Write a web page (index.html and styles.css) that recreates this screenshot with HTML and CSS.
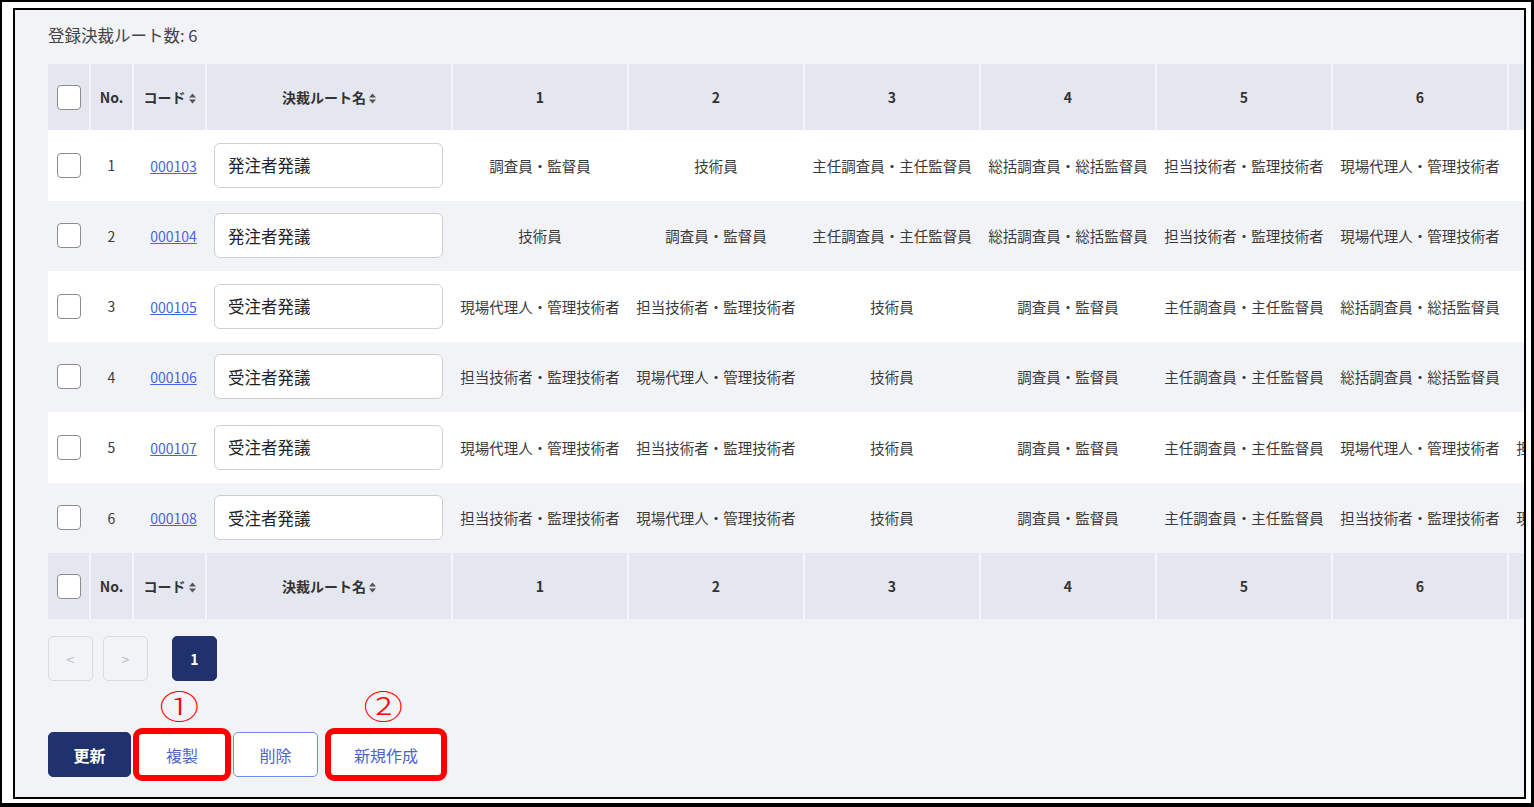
FILE: index.html
```html
<!DOCTYPE html>
<html lang="ja">
<head>
  <meta charset="utf-8">
  <title>決裁ルート一覧</title>
  <link rel="stylesheet" href="styles.css">
</head>
<body>
<div class="frame">
  <div class="screen">
    <p class="count">登録決裁ルート数: 6</p>

    <div class="table-scroll">
      <table class="route-table">
        <colgroup>
          <col class="c-check"><col class="c-no"><col class="c-code"><col class="c-name">
          <col class="c-step"><col class="c-step"><col class="c-step"><col class="c-step">
          <col class="c-step"><col class="c-step"><col class="c-step">
        </colgroup>
        <thead>
          <tr>
            <th><input class="check" type="checkbox"></th>
            <th>No.</th>
            <th>コード<svg class="sort" viewBox="0 0 7 11"><path d="M0 4.6L3.5 0.4 7 4.6z M0 6.4L3.5 10.6 7 6.4z"/></svg></th>
            <th>決裁ルート名<svg class="sort" viewBox="0 0 7 11"><path d="M0 4.6L3.5 0.4 7 4.6z M0 6.4L3.5 10.6 7 6.4z"/></svg></th>
            <th>1</th><th>2</th><th>3</th><th>4</th><th>5</th><th>6</th><th>7</th>
          </tr>
        </thead>
        <tbody>
          <tr>
            <td><input class="check" type="checkbox"></td>
            <td>1</td>
            <td><a class="code" href="#">000103</a></td>
            <td><input class="name-input" type="text" value="発注者発議"></td>
            <td>調査員・監督員</td>
            <td>技術員</td>
            <td>主任調査員・主任監督員</td>
            <td>総括調査員・総括監督員</td>
            <td>担当技術者・監理技術者</td>
            <td>現場代理人・管理技術者</td>
            <td></td>
          </tr>
          <tr>
            <td><input class="check" type="checkbox"></td>
            <td>2</td>
            <td><a class="code" href="#">000104</a></td>
            <td><input class="name-input" type="text" value="発注者発議"></td>
            <td>技術員</td>
            <td>調査員・監督員</td>
            <td>主任調査員・主任監督員</td>
            <td>総括調査員・総括監督員</td>
            <td>担当技術者・監理技術者</td>
            <td>現場代理人・管理技術者</td>
            <td></td>
          </tr>
          <tr>
            <td><input class="check" type="checkbox"></td>
            <td>3</td>
            <td><a class="code" href="#">000105</a></td>
            <td><input class="name-input" type="text" value="受注者発議"></td>
            <td>現場代理人・管理技術者</td>
            <td>担当技術者・監理技術者</td>
            <td>技術員</td>
            <td>調査員・監督員</td>
            <td>主任調査員・主任監督員</td>
            <td>総括調査員・総括監督員</td>
            <td></td>
          </tr>
          <tr>
            <td><input class="check" type="checkbox"></td>
            <td>4</td>
            <td><a class="code" href="#">000106</a></td>
            <td><input class="name-input" type="text" value="受注者発議"></td>
            <td>担当技術者・監理技術者</td>
            <td>現場代理人・管理技術者</td>
            <td>技術員</td>
            <td>調査員・監督員</td>
            <td>主任調査員・主任監督員</td>
            <td>総括調査員・総括監督員</td>
            <td></td>
          </tr>
          <tr>
            <td><input class="check" type="checkbox"></td>
            <td>5</td>
            <td><a class="code" href="#">000107</a></td>
            <td><input class="name-input" type="text" value="受注者発議"></td>
            <td>現場代理人・管理技術者</td>
            <td>担当技術者・監理技術者</td>
            <td>技術員</td>
            <td>調査員・監督員</td>
            <td>主任調査員・主任監督員</td>
            <td>現場代理人・管理技術者</td>
            <td>担当技術者・監理技術者</td>
          </tr>
          <tr>
            <td><input class="check" type="checkbox"></td>
            <td>6</td>
            <td><a class="code" href="#">000108</a></td>
            <td><input class="name-input" type="text" value="受注者発議"></td>
            <td>担当技術者・監理技術者</td>
            <td>現場代理人・管理技術者</td>
            <td>技術員</td>
            <td>調査員・監督員</td>
            <td>主任調査員・主任監督員</td>
            <td>担当技術者・監理技術者</td>
            <td>現場代理人・管理技術者</td>
          </tr>
        </tbody>
        <tfoot>
          <tr>
            <th><input class="check" type="checkbox"></th>
            <th>No.</th>
            <th>コード<svg class="sort" viewBox="0 0 7 11"><path d="M0 4.6L3.5 0.4 7 4.6z M0 6.4L3.5 10.6 7 6.4z"/></svg></th>
            <th>決裁ルート名<svg class="sort" viewBox="0 0 7 11"><path d="M0 4.6L3.5 0.4 7 4.6z M0 6.4L3.5 10.6 7 6.4z"/></svg></th>
            <th>1</th><th>2</th><th>3</th><th>4</th><th>5</th><th>6</th><th>7</th>
          </tr>
        </tfoot>
      </table>
    </div>

    <div class="pager">
      <button class="page-btn" type="button" disabled>&lt;</button>
      <button class="page-btn" type="button" disabled>&gt;</button>
      <button class="page-btn current" type="button">1</button>
    </div>

    <div class="actions">
      <button class="btn btn-primary" type="button">更新</button>
      <span class="callout" data-no="①"><button class="btn btn-outline btn-copy" type="button">複製</button></span>
      <button class="btn btn-outline btn-delete" type="button">削除</button>
      <span class="callout callout-new" data-no="②"><button class="btn btn-outline btn-new" type="button">新規作成</button></span>
    </div>
  </div>
</div>
</body>
</html>
```

FILE: styles.css
```css
html, body {
  margin: 0;
  padding: 0;
  background: #fff;
}

body {
  font-family: "Noto Sans CJK JP", "Noto Sans", sans-serif;
  color: #333;
}

/* double black frame around the screen */
.frame {
  box-sizing: border-box;
  height: 807px;
  border: solid #000;
  border-width: 2px 3px 4px 2px;
  padding: 6px 5px 4px 11px;
  background: #fff;
}

.screen {
  box-sizing: border-box;
  height: 100%;
  border: 2px solid #000;
  background: #f2f3f7;
  padding: 13px 0 0 33px;
  overflow: hidden;
}

.count {
  margin: 0 0 17px;
  font-size: 16.5px;
  line-height: 24px;
  color: #444;
}

.table-scroll {
  overflow: hidden;
}

.route-table {
  table-layout: fixed;
  width: 1636px;
  border-collapse: collapse;
  font-size: 14.5px;
}

.c-check { width: 42px; }
.c-no { width: 43px; }
.c-code { width: 73px; }
.c-name { width: 246px; }
.c-step { width: 176px; }

.route-table th {
  height: 66px;
  padding: 0;
  background: #e4e7f0;
  border-right: 2px solid #f4f5f9;
  font-size: 14px;
  font-weight: bold;
  color: #333;
  text-align: center;
  white-space: nowrap;
}

.route-table td {
  height: 70.5px;
  padding: 0 4px;
  text-align: center;
  white-space: nowrap;
  color: #3a3a3a;
}

.route-table td:first-child,
.route-table td:nth-child(2) {
  padding: 0;
  font-size: 14px;
}

.route-table tbody tr:nth-child(odd) {
  background: #fff;
}

.sort {
  width: 7px;
  height: 11px;
  margin-left: 3px;
  vertical-align: -1px;
  fill: #555;
}

.check {
  -webkit-appearance: none;
  appearance: none;
  display: block;
  box-sizing: border-box;
  width: 24px;
  height: 25px;
  margin: 0 auto;
  border: 1.5px solid #8c8c8c;
  border-radius: 4px;
  background: #fff;
}

.code {
  display: inline-block;
  padding-left: 8px;
  font-size: 14px;
  color: #4466e0;
  text-decoration: underline;
}

.name-input {
  display: block;
  box-sizing: border-box;
  width: 229px;
  height: 45px;
  margin-left: 4px;
  padding: 0 13px;
  border: 1px solid #cfcfcf;
  border-radius: 6px;
  background: #fff;
  font-family: inherit;
  font-size: 16.5px;
  color: #222;
}

/* pagination */
.pager {
  display: flex;
  gap: 10px;
  margin-top: 17px;
}

.page-btn {
  box-sizing: border-box;
  width: 45px;
  height: 45px;
  border: 1px solid #dadada;
  border-radius: 5px;
  background: transparent;
  font-family: inherit;
  font-size: 14px;
  color: #bbb;
}

.page-btn.current {
  margin-left: 14px;
  border-color: #1f326e;
  background: #1f326e;
  color: #fff;
  font-weight: bold;
}

/* action buttons */
.actions {
  display: flex;
  align-items: center;
  margin-top: 51px;
}

.btn {
  box-sizing: border-box;
  height: 45px;
  border-radius: 5px;
  font-family: inherit;
  font-size: 16px;
}

.btn-primary {
  width: 83px;
  border: 1px solid #1f326e;
  background: #1f326e;
  color: #fff;
  font-weight: bold;
}

.btn-outline {
  border: 1px solid #6f8fe8;
  background: #fff;
  color: #4d62cf;
}

.btn-copy { width: 90px; }
.btn-delete { width: 85px; margin-left: 6px; }
.btn-new { width: 114px; }

.callout {
  position: relative;
  display: block;
  margin-left: 6px;
}

.callout-new {
  margin-left: 11px;
}

/* red highlight drawn over the button edge */
.callout::after {
  content: "";
  position: absolute;
  top: -4px;
  right: -4px;
  bottom: -4px;
  left: -4px;
  border: 6px solid #f00;
  border-radius: 9px;
}

.callout::before {
  content: attr(data-no);
  position: absolute;
  left: 50%;
  top: -45px;
  transform: translateX(-58%) scaleX(1.2);
  font-size: 33px;
  font-weight: 300;
  line-height: 36px;
  color: #f00;
}
```
